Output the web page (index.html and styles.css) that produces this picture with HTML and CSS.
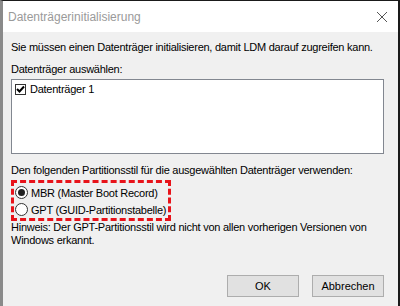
FILE: index.html
```html
<!DOCTYPE html>
<html lang="de">
<head>
<meta charset="utf-8"/>
<meta content="width=device-width, initial-scale=1.0" name="viewport"/>
<title>Datenträgerinitialisierung</title>
<link rel="stylesheet" href="styles.css">
</head>
<body>
<div class="window">
  <div class="titlebar">
    <span class="title">Datenträgerinitialisierung</span>
    <svg class="close" width="12" height="12" viewBox="0 0 12 12">
      <path d="M1 1 L11 11 M11 1 L1 11" stroke="#555" stroke-width="1" fill="none"/>
    </svg>
  </div>
  <div class="content">
    <p class="line intro">Sie müssen einen Datenträger initialisieren, damit LDM darauf zugreifen kann.</p>
    <p class="line label">Datenträger auswählen:</p>
    <div class="listbox">
      <div class="item">
        <span class="checkbox">
          <svg width="9" height="9" viewBox="0 0 9 9"><path d="M1 4 L3.5 6.5 L8 1.5" stroke="#000" stroke-width="2" fill="none"/></svg>
        </span>
        <span>Datenträger 1</span>
      </div>
    </div>
    <p class="line style-label">Den folgenden Partitionsstil für die ausgewählten Datenträger verwenden:</p>
    <div class="choices">
      <div class="radio-row"><span class="radio checked"></span><span>MBR (Master Boot Record)</span></div>
      <div class="radio-row"><span class="radio"></span><span>GPT (GUID-Partitionstabelle)</span></div>
    </div>
    <p class="hint">Hinweis: Der GPT-Partitionsstil wird nicht von allen vorherigen Versionen von Windows erkannt.</p>
    <div class="buttons">
      <button class="btn">OK</button>
      <button class="btn">Abbrechen</button>
    </div>
  </div>
</div>
</body>
</html>
```
FILE: styles.css
```css
html, body {
  margin: 0;
  padding: 0;
  background: #fff;
}
.window {
  width: 400px;
  height: 306px;
  box-sizing: border-box;
  border-top: 1px solid #1a1a1a;
  border-left: 3px solid #8a8a8a;
  border-right: 2px solid #1a1a1a;
  display: flex;
  flex-direction: column;
  font-family: "Liberation Sans", Arial, sans-serif;
  font-size: 11px;
  letter-spacing: -0.25px;
  color: #000;
}
.titlebar {
  height: 31px;
  background: #fff;
  display: flex;
  align-items: center;
  justify-content: space-between;
  padding: 0 10px 0 5px;
}
.title {
  font-size: 12px;
  letter-spacing: 0;
  color: #9a9a9a;
}
.content {
  flex: 1;
  background: #f0f0f0;
  padding: 6px 14px 0 8px;
  display: flex;
  flex-direction: column;
}
.line {
  margin: 0;
  line-height: 13px;
  white-space: nowrap;
}
.intro { margin-top: 3px; }
.label { margin-top: 9px; }
.listbox {
  margin-top: 3px;
  height: 70px;
  background: #fff;
  border: 1px solid #828790;
  padding: 3px 0 0 3px;
}
.item {
  display: flex;
  align-items: center;
  gap: 4px;
  line-height: 13px;
}
.checkbox {
  width: 11px;
  height: 11px;
  box-sizing: border-box;
  border: 1px solid #333;
  background: #fff;
  display: flex;
  align-items: center;
  justify-content: center;
}
.style-label { margin-top: 10px; }
.choices {
  margin-top: 3px;
  align-self: flex-start;
  border: 3px dashed #e8131a;
  padding: 1px 2px 0 1px;
}
.radio-row {
  display: flex;
  align-items: center;
  gap: 3px;
  height: 17px;
}
.radio {
  width: 13px;
  height: 13px;
  box-sizing: border-box;
  border: 1px solid #333;
  border-radius: 50%;
  background: #fff;
  display: flex;
  align-items: center;
  justify-content: center;
}
.radio.checked::after {
  content: "";
  width: 7px;
  height: 7px;
  border-radius: 50%;
  background: #222;
}
.hint {
  margin: 0;
  line-height: 13px;
}
.buttons {
  margin-top: auto;
  margin-bottom: 9px;
  display: flex;
  justify-content: flex-end;
  gap: 13px;
}
.btn {
  width: 72px;
  height: 22px;
  background: #e1e1e1;
  border: 1px solid #adadad;
  font-family: "Liberation Sans", Arial, sans-serif;
  font-size: 11px;
  color: #000;
  padding: 0;
}
```
